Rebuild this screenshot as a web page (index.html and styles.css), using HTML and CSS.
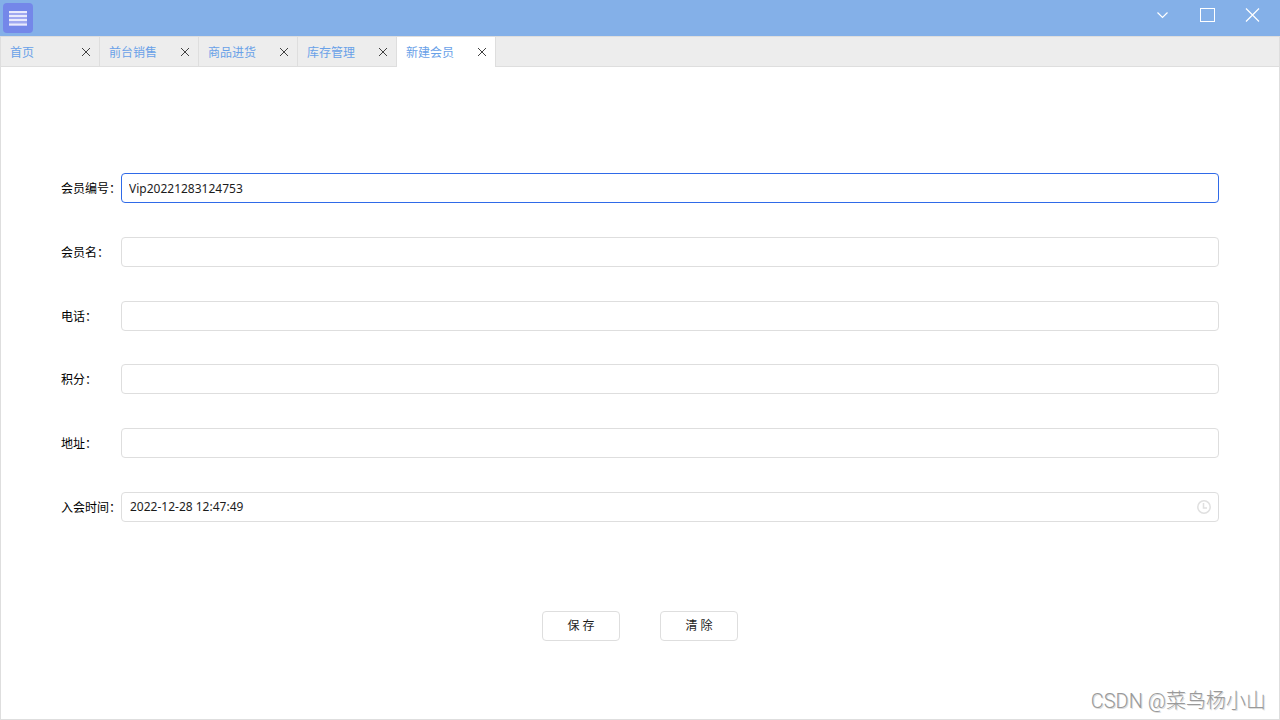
FILE: index.html
```html
<!DOCTYPE html>
<html lang="zh-CN">
<head>
<meta charset="utf-8">
<title>新建会员</title>
<link rel="stylesheet" href="styles.css">
</head>
<body>
<div class="window">
  <header class="titlebar">
    <button class="menu-button" type="button" aria-label="菜单">
      <svg width="30" height="30" viewBox="0 0 30 30"><path class="menu-fill" d="M6 8h18v15H6z"/><path class="menu-lines" d="M6 9h18M6 13h18M6 17h18M6 21.5h18"/></svg>
    </button>
    <div class="window-controls">
      <button class="control" type="button" aria-label="最小化"><svg width="16" height="16" viewBox="0 0 16 16"><path d="M2.5 5.5l5 5 5-5"/></svg></button>
      <button class="control" type="button" aria-label="最大化"><svg width="16" height="16" viewBox="0 0 16 16"><path d="M.5 1.5h14v13H.5z" shape-rendering="crispEdges"/></svg></button>
      <button class="control" type="button" aria-label="关闭"><svg width="16" height="16" viewBox="0 0 16 16"><path d="M1 1.5l13 13M14 1.5l-13 13"/></svg></button>
    </div>
  </header>
  <nav class="tabs">
    <div class="tab"><a class="tab-link" href="#">首页</a><button class="tab-close" type="button" aria-label="关闭首页"><svg width="10" height="10" viewBox="0 0 10 10"><path d="M1 1l8 8M9 1L1 9"/></svg></button></div>
    <div class="tab"><a class="tab-link" href="#">前台销售</a><button class="tab-close" type="button" aria-label="关闭前台销售"><svg width="10" height="10" viewBox="0 0 10 10"><path d="M1 1l8 8M9 1L1 9"/></svg></button></div>
    <div class="tab"><a class="tab-link" href="#">商品进货</a><button class="tab-close" type="button" aria-label="关闭商品进货"><svg width="10" height="10" viewBox="0 0 10 10"><path d="M1 1l8 8M9 1L1 9"/></svg></button></div>
    <div class="tab"><a class="tab-link" href="#">库存管理</a><button class="tab-close" type="button" aria-label="关闭库存管理"><svg width="10" height="10" viewBox="0 0 10 10"><path d="M1 1l8 8M9 1L1 9"/></svg></button></div>
    <div class="tab tab-active"><a class="tab-link" href="#" aria-current="page">新建会员</a><button class="tab-close" type="button" aria-label="关闭新建会员"><svg width="10" height="10" viewBox="0 0 10 10"><path d="M1 1l8 8M9 1L1 9"/></svg></button></div>
  </nav>
  <form class="form">
    <div class="fields">
      <div class="field"><label class="label" for="vip-id">会员编号：</label><input class="input input-active" id="vip-id" type="text" value="Vip20221283124753"></div>
      <div class="field"><label class="label" for="vip-name">会员名：</label><input class="input" id="vip-name" type="text"></div>
      <div class="field"><label class="label" for="phone">电话：</label><input class="input" id="phone" type="text"></div>
      <div class="field"><label class="label" for="points">积分：</label><input class="input" id="points" type="text"></div>
      <div class="field"><label class="label" for="address">地址：</label><input class="input" id="address" type="text"></div>
      <div class="field">
        <label class="label" for="joined">入会时间：</label>
        <div class="input date-box">
          <input class="date-input" id="joined" type="text" value="2022-12-28 12:47:49">
          <svg class="clock" width="14" height="14" viewBox="0 0 14 14"><circle cx="7" cy="7" r="6.2"/><path d="M6.5 3v5H10"/></svg>
        </div>
      </div>
    </div>
    <div class="actions">
      <button class="button" type="button">保 存</button>
      <button class="button" type="button">清 除</button>
    </div>
  </form>
  <div class="watermark">CSDN @菜鸟杨小山</div>
</div>
</body>
</html>
```
FILE: styles.css
```css
* {
  box-sizing: border-box;
}

body {
  margin: 0;
  background: #fff;
  color: #000;
  font: 12px/18px "Noto Sans", "Noto Sans CJK SC", sans-serif;
}

button,
input {
  font: inherit;
  color: inherit;
}

svg {
  display: block;
  fill: none;
}

.window {
  position: relative;
  display: flex;
  flex-direction: column;
  min-height: 100vh;
}

.titlebar {
  display: flex;
  justify-content: space-between;
  height: 36px;
  padding: 3px;
  background: #84b0e8;
}

.menu-button {
  width: 30px;
  height: 30px;
  padding: 0;
  border: 0;
  border-radius: 4px;
  background: #7487e9;
}

.menu-fill {
  fill: #a0a9f0;
}

.menu-lines {
  stroke: #e8eafc;
  stroke-width: 2;
}

.window-controls {
  display: flex;
  gap: 29px;
  padding: 4px 16px 0 0;
}

.control {
  width: 16px;
  height: 16px;
  padding: 0;
  border: 0;
  background: none;
  stroke: #fff;
  stroke-width: 1.2;
}

.tabs {
  display: flex;
  height: 31px;
  border: 1px solid #dedede;
  border-bottom: 0;
  background: #ededed;
  box-shadow: inset 0 -1px #dedede;
}

.tab {
  display: flex;
  align-items: center;
  justify-content: space-between;
  width: 99px;
  padding: 0 8px 0 9px;
  border-right: 1px solid #dedede;
}

.tab-active {
  background: #fff;
}

.tab-link {
  padding-top: 2px;
  color: #69a1e8;
  text-decoration: none;
}

.tab-close {
  padding: 0;
  border: 0;
  background: none;
  stroke: #404040;
  stroke-width: 1;
}

.form {
  display: flex;
  flex: 1;
  flex-direction: column;
  padding: 106px 60px 78px;
  border: 1px solid #dedede;
  border-top: 0;
}

.fields {
  display: flex;
  flex: 1;
  flex-direction: column;
  justify-content: space-between;
}

.field {
  display: flex;
  align-items: center;
}

.label {
  width: 60px;
  padding-top: 2px;
  white-space: nowrap;
}

.input {
  flex: 1;
  height: 30px;
  min-width: 0;
  padding: 0 7px;
  border: 1px solid #dedede;
  border-radius: 4px;
  background: #fff;
  color: #1c1c1c;
  outline: 0;
}

.input-active {
  border-color: #2f6ae8;
}

.date-box {
  display: flex;
  align-items: center;
  padding-left: 8px;
}

.date-input {
  flex: 1;
  padding: 0;
  border: 0;
  background: none;
  outline: 0;
}

.clock {
  stroke: #e0e0e0;
  stroke-width: 1.5;
}

.actions {
  display: flex;
  justify-content: center;
  gap: 40px;
  margin-top: 89px;
}

.button {
  width: 78px;
  height: 30px;
  padding: 0;
  border: 1px solid #dedede;
  border-radius: 4px;
  background: #fff;
  color: #1c1c1c;
}

.watermark {
  position: absolute;
  right: 14px;
  bottom: 5px;
  color: #999;
  font: 300 20px/28px Roboto, "Noto Sans CJK SC", sans-serif;
  text-shadow: 1px 1px #ddd;
}
```
